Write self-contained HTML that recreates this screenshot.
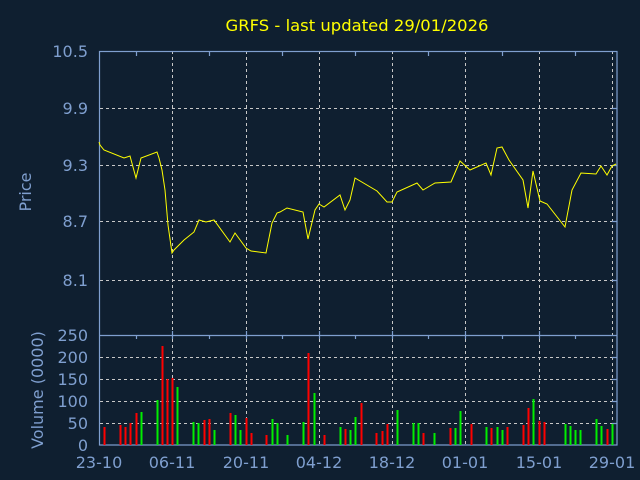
<!DOCTYPE html>
<html><head><style>
html,body{margin:0;padding:0;background:#0f1f30;}
svg{display:block}
text{font-family:"DejaVu Sans","Liberation Sans",sans-serif;}
</style></head><body>
<svg width="640" height="480" viewBox="0 0 640 480" xmlns="http://www.w3.org/2000/svg">
<rect width="640" height="480" fill="#0f1f30"/>
<text x="357" y="31" fill="#ffff00" font-size="16" text-anchor="middle" textLength="263" lengthAdjust="spacingAndGlyphs">GRFS - last updated 29/01/2026</text>
<g stroke="#c8c8c8" stroke-width="1" stroke-dasharray="3,3" fill="none">
<path d="M100 108.5H617M100 165.5H617M100 221.5H617M100 280.5H617"/>
<path d="M100 357.5H617M100 379.5H617M100 401.5H617M100 423.5H617"/>
<path d="M172.5 51V445M246.5 51V445M319.5 51V445M392.5 51V445M465.5 51V445M539.5 51V445M612.5 51V445"/>
</g>
<g stroke="#7f9fcf" stroke-width="1.2" fill="none">
<rect x="99.5" y="51.5" width="517.5" height="393.5"/>
<path d="M99.5 335.5H617"/>
<path d="M136.5 52v4M209.5 52v4M282.5 52v4M355.5 52v4M428.5 52v4M502.5 52v4M575.5 52v4"/>
<path d="M136.5 335v4M209.5 335v4M282.5 335v4M355.5 335v4M428.5 335v4M502.5 335v4M575.5 335v4"/>
<path d="M172.5 331v8M246.5 331v8M319.5 331v8M392.5 331v8M465.5 331v8M539.5 331v8"/>
<path d="M612 108.5h5M612 165.5h5M612 221.5h5M612 280.5h5M612 357.5h5M612 379.5h5M612 401.5h5M612 423.5h5"/>
</g>
<g fill="#7f9fcf" font-size="16" text-anchor="end">
<text x="88" y="57">10.5</text>
<text x="88" y="114">9.9</text>
<text x="88" y="171">9.3</text>
<text x="88" y="227">8.7</text>
<text x="88" y="286">8.1</text>
<text x="88" y="341">250</text>
<text x="88" y="363">200</text>
<text x="88" y="385">150</text>
<text x="88" y="407">100</text>
<text x="88" y="429">50</text>
<text x="88" y="451">0</text>
</g>
<g fill="#7f9fcf" font-size="16" text-anchor="middle">
<text x="99" y="468">23-10</text>
<text x="172" y="468">06-11</text>
<text x="246" y="468">20-11</text>
<text x="319" y="468">04-12</text>
<text x="392" y="468">18-12</text>
<text x="465" y="468">01-01</text>
<text x="539" y="468">15-01</text>
<text x="612" y="468">29-01</text>
<text transform="translate(31,192) rotate(-90)">Price</text>
<text transform="translate(43,390) rotate(-90)">Volume (0000)</text>
</g>
<polyline fill="none" stroke="#ffff00" stroke-width="1" points="99,142 100,145 104,150 124,158 130,156 136,178 141,158 157,152 159,158 162,170 165,190 168,225 172,253 174,250 184,240 194,232 199,220 206,222 214,220 230,242 235,233 246,248 251,251 266,253 272,223 277,213 280,212 287,208 303,212 308,239 315,210 319,204 324,207 340,195 345,210 350,200 355,178 377,191 387,202 392,202 397,192 417,183 423,190 435,183 451,182 460,161 470,170 486,163 491,175 497,148 502,147 509,160 523,180 528,208 533,171 540,201 547,204 565,227 572,190 581,173 596,174 601,166 607,175 612,166 616,164"/>
<g stroke-width="2">
<g stroke="#ff0000">
<path d="M104.5 445V427M120.5 445V425M125.5 445V427M130.5 445V423M136.5 445V413M162.5 445V346M167.5 445V379M172.5 445V378M204.5 445V420M209.5 445V419M230.5 445V413M246.5 445V418M251.5 445V433M266.5 445V435M308.5 445V353M324.5 445V435M345.5 445V429M361.5 445V403M376.5 445V433M382.5 445V431M387.5 445V424M423.5 445V433M450.5 445V428M471.5 445V424M491.5 445V428M507.5 445V427M523.5 445V425M528.5 445V408M539.5 445V421M544.5 445V422M607.5 445V429"/>
</g>
<g stroke="#00ee00">
<path d="M141.5 445V412M157.5 445V400M177.5 445V387M193.5 445V422M198.5 445V423M214.5 445V430M235.5 445V415M240.5 445V430M272.5 445V419M277.5 445V423M287.5 445V435M303.5 445V422M314.5 445V393M340.5 445V427M350.5 445V430M355.5 445V417M397.5 445V410M413.5 445V423M418.5 445V423M434.5 445V433M455.5 445V428M460.5 445V411M486.5 445V427M497.5 445V427M502.5 445V430M533.5 445V399M565.5 445V424M570.5 445V426M575.5 445V430M580.5 445V430M596.5 445V419M601.5 445V426M612.5 445V424"/>
</g>
</g>
</svg>
</body></html>
